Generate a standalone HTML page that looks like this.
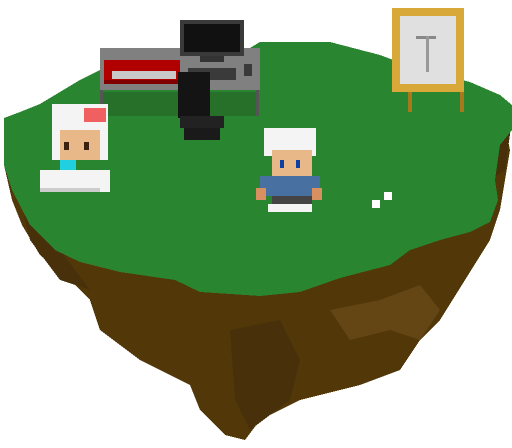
<!DOCTYPE html><html><head><style>html,body{margin:0;padding:0;background:#fff;width:512px;height:448px;overflow:hidden}</style></head><body>
<svg width="512" height="448" viewBox="0 0 512 448" shape-rendering="crispEdges">
<!-- dirt -->
<polygon fill="#523808" points="4,165 12,200 22,225 40,255 70,280 90,300 100,330 140,360 190,385 200,410 225,435 245,440 260,420 300,400 360,385 400,370 420,340 440,320 465,280 490,240 500,210 505,180 510,150 505,125"/>
<polygon fill="#634614" points="330,310 380,300 420,285 440,310 420,340 390,330 350,340"/>
<polygon fill="#47300a" points="230,330 280,320 300,360 290,400 250,430 235,400"/>
<polygon fill="#47300a" points="480,130 512,120 505,170 490,180 475,160"/>
<polygon fill="#47300a" points="20,200 60,250 90,290 60,280 30,240"/>
<!-- grass -->
<polygon fill="#2a8530" points="4,118 20,112 40,104 60,92 80,80 100,70 110,55 250,48 260,42 330,42 380,55 420,70 470,82 500,95 512,105 512,130 500,145 495,180 498,200 490,222 470,232 440,240 410,250 390,265 340,278 300,292 260,296 200,292 175,280 120,272 80,262 55,250 30,225 12,190 4,165"/>
<!-- desk -->
<rect x="100" y="48" width="160" height="42" fill="#808080"/>
<rect x="100" y="90" width="3" height="26" fill="#555"/><rect x="256" y="90" width="3" height="26" fill="#555"/>
<rect x="103" y="92" width="153" height="24" fill="#26702a"/>
<rect x="104" y="60" width="76" height="24" fill="#b00000"/>
<rect x="112" y="71" width="64" height="8" fill="#c8c8c8"/>
<rect x="104" y="80" width="76" height="4" fill="#800000"/>
<rect x="188" y="68" width="48" height="12" fill="#3a3a3a"/>
<rect x="244" y="64" width="8" height="12" fill="#3a3a3a"/>
<!-- monitor -->
<rect x="180" y="20" width="64" height="36" fill="#3a3a3a"/>
<rect x="184" y="24" width="56" height="28" fill="#111"/>
<rect x="200" y="56" width="24" height="6" fill="#333"/>
<!-- chair -->
<rect x="178" y="72" width="32" height="46" fill="#141414"/>
<rect x="180" y="116" width="44" height="12" fill="#222"/>
<rect x="184" y="128" width="36" height="12" fill="#1a1a1a"/>
<!-- easel -->
<rect x="408" y="92" width="4" height="20" fill="#a8781c"/><rect x="460" y="80" width="4" height="32" fill="#a8781c"/>
<rect x="392" y="8" width="72" height="84" fill="#d8a838"/>
<rect x="400" y="16" width="56" height="68" fill="#e0e0e0"/>
<rect x="416" y="36" width="20" height="3" fill="#888"/><rect x="426" y="36" width="3" height="36" fill="#999"/>
<!-- left character -->
<rect x="52" y="104" width="56" height="56" fill="#f4f4f4"/>
<rect x="60" y="130" width="40" height="30" fill="#e8b888"/>
<rect x="64" y="142" width="5" height="8" fill="#3a2010"/><rect x="84" y="142" width="5" height="8" fill="#3a2010"/>
<rect x="84" y="108" width="22" height="14" fill="#f06060"/>
<rect x="60" y="160" width="16" height="12" fill="#20d0e0"/>
<rect x="40" y="170" width="70" height="22" fill="#f4f4f4"/>
<rect x="40" y="188" width="60" height="4" fill="#ccc"/>
<!-- main character -->
<rect x="264" y="128" width="52" height="28" fill="#f4f4f4"/>
<rect x="272" y="150" width="40" height="28" fill="#e8b888"/>
<rect x="280" y="160" width="4" height="8" fill="#1040a0"/><rect x="296" y="160" width="4" height="8" fill="#1040a0"/>
<rect x="260" y="176" width="60" height="20" fill="#4870a0"/>
<rect x="256" y="188" width="10" height="12" fill="#d89060"/><rect x="312" y="188" width="10" height="12" fill="#d89060"/>
<rect x="272" y="196" width="40" height="8" fill="#444"/>
<rect x="268" y="204" width="44" height="8" fill="#f4f4f4"/>
<!-- flowers -->
<rect x="372" y="200" width="8" height="8" fill="#fff"/><rect x="384" y="192" width="8" height="8" fill="#fff"/>
</svg></body></html>
